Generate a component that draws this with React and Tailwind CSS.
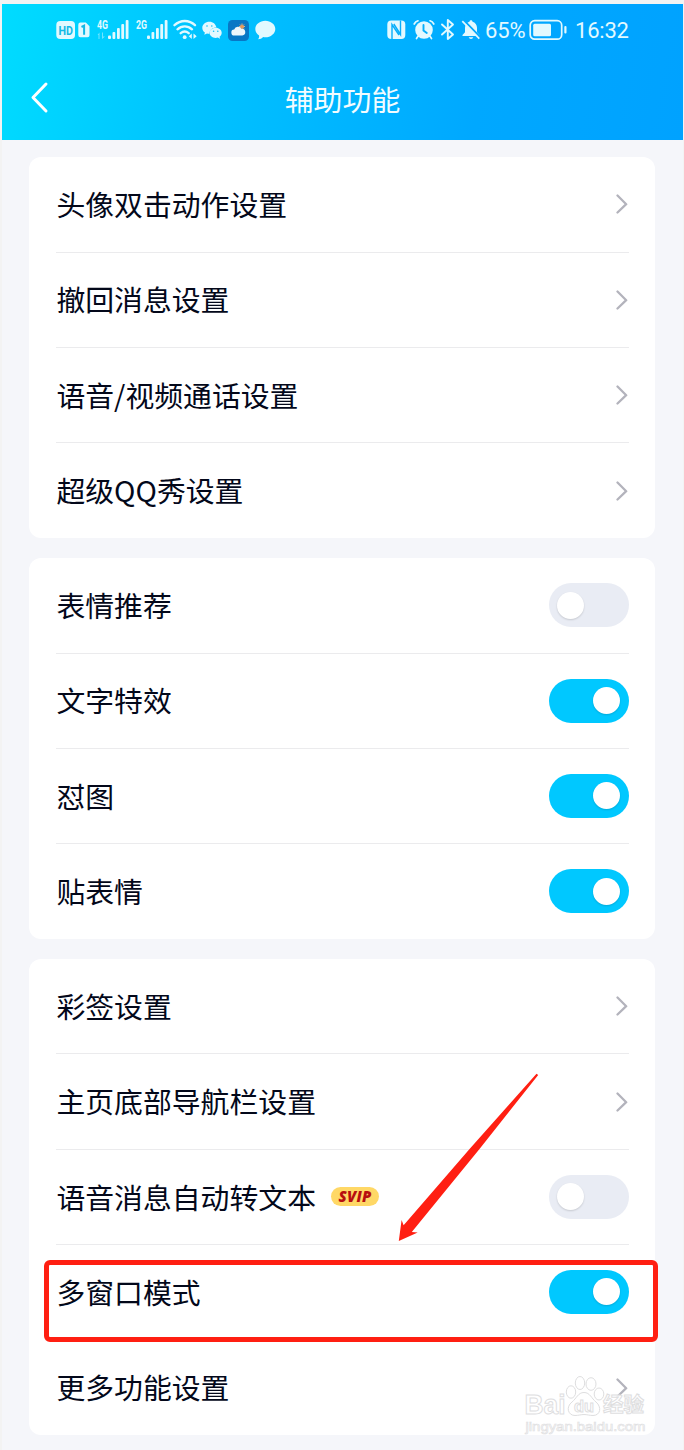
import { useState } from "react";

const sections = [
  [
    { label: "头像双击动作设置" },
    { label: "撤回消息设置" },
    { label: "语音/视频通话设置" },
    { label: "超级QQ秀设置" },
  ],
  [
    { label: "表情推荐", toggle: true, on: false },
    { label: "文字特效", toggle: true, on: true },
    { label: "怼图", toggle: true, on: true },
    { label: "贴表情", toggle: true, on: true },
  ],
  [
    { label: "彩签设置" },
    { label: "主页底部导航栏设置" },
    { label: "语音消息自动转文本", toggle: true, on: false, svip: true },
    { label: "多窗口模式", toggle: true, on: true, marked: true },
    { label: "更多功能设置" },
  ],
];

const Signal = ({ label, data }) => (
  <svg width="33" height="24" viewBox="0 0 33 24" fill="#e2f9ff">
    <text x="0" y="10.5" fontSize="12" fontWeight="700" fontFamily="Roboto, sans-serif" textLength="11" lengthAdjust="spacingAndGlyphs">
      {label}
    </text>
    {data && <path d="M.5 17l2-2.5V21h-1v-4zM5 14.5h1v4h2L5 21z" opacity=".5" />}
    <rect x="11" y="17.5" width="3" height="3.5" rx="1" />
    <rect x="15.5" y="14" width="2.8" height="7" rx="1" />
    <rect x="20" y="10" width="2.8" height="11" rx="1" />
    <rect x="24.3" y="6" width="2.8" height="15" rx="1" />
    <rect x="28.7" y="2" width="2.8" height="19" rx="1" />
  </svg>
);

const StatusBar = () => (
  <div className="flex h-[52px] items-center pl-[54px] font-['Roboto',sans-serif] text-[#e2f9ff]">
    {/* HD + sim */}
    <svg width="36" height="24" viewBox="0 0 36 24">
      <rect x="0.3" y="3" width="18.7" height="18" rx="4" fill="#e2f9ff" />
      <text x="2.4" y="16.6" fontSize="13" fontWeight="700" fontFamily="Roboto, sans-serif" fill="#13b9e6" textLength="14.5" lengthAdjust="spacingAndGlyphs">
        HD
      </text>
      <path d="M24.5 4.5h5.3l3.7 3.7v9a2 2 0 0 1-2 2h-7a2.2 2.2 0 0 1-2.2-2.2V6.7a2.2 2.2 0 0 1 2.2-2.2z" fill="#e2f9ff" />
      <path d="M25.5 9l2.6-1.3v9" fill="none" stroke="#13b9e6" strokeWidth="2" />
    </svg>
    <div className="ml-[5px] flex">
      <Signal label="4G" data />
    </div>
    <div className="ml-[6px] flex">
      <Signal label="2G" />
    </div>
    {/* wifi */}
    <svg className="ml-[4px]" width="26" height="24" viewBox="0 0 26 24" fill="none" stroke="#e2f9ff" strokeWidth="2.3" strokeLinecap="round">
      <path d="M1.5 7.2c6-5.6 14.6-5.6 20.5 0M4.5 11.3c4.3-4 10.2-4 14.5 0M7.7 15.2c2.5-2.2 5.5-2.2 8 0" />
      <circle cx="11.7" cy="19.2" r="1.9" fill="#e2f9ff" stroke="none" />
      <path d="M18.8 15.5v5.5l-3-2.7zM20.5 15.5v5.5l3.2-2.7z" fill="#e2f9ff" stroke="none" />
    </svg>
    {/* wechat */}
    <svg className="ml-[3px]" width="21" height="24" viewBox="0 0 21 24" fill="#e2f9ff">
      <path d="M7.5 3.8C3.4 3.8.3 6.5.3 9.9c0 1.9 1 3.5 2.6 4.6l-.6 2.3 2.7-1.3c.8.2 1.5.3 2.3.3.3-3.9 3-6.3 7.1-6.3C13.8 6.2 11 3.8 7.5 3.8z" />
      <path d="M13.7 9.7c-3.5 0-6.2 2.3-6.2 5.1s2.7 5.1 6.2 5.1c.7 0 1.4-.1 2-.3l2.4 1.2-.6-2c1.4-1 2.2-2.4 2.2-4 0-2.8-2.6-5.1-6-5.1z" />
      <g fill="#12bff5">
        <circle cx="5" cy="8" r=".8" />
        <circle cx="9.8" cy="8" r=".8" />
        <circle cx="11.6" cy="13.2" r=".8" />
        <circle cx="15.8" cy="13.2" r=".8" />
      </g>
    </svg>
    {/* weather */}
    <svg className="ml-[5px]" width="21" height="24" viewBox="0 0 21 24">
      <rect y="2" width="21" height="21" rx="4.5" fill="#0877c5" />
      <path d="M14 5.5v6M11 8.5h6M12 6.5l4 4M16 6.5l-4 4" stroke="#e5b184" strokeWidth="1" />
      <circle cx="14" cy="8.9" r="1.9" fill="#e59a5a" />
      <path d="M6.5 17.5a3 3 0 0 1-.3-6 4 4 0 0 1 7.4-.6 3.3 3.3 0 0 1 .7 6.6z" fill="#eef6fb" />
    </svg>
    {/* message */}
    <svg className="ml-[6px]" width="21" height="24" viewBox="0 0 21 24" fill="#e2f9ff">
      <path d="M10.3 2.8C4.8 2.8.3 6.4.3 11c0 2.7 1.5 5 3.8 6.5.2 1.7-.3 2.8-1 3.8 2 0 3.7-.7 5-2.2.7.1 1.5.2 2.2.2 5.5 0 10-3.7 10-8.3s-4.5-8.2-10-8.2z" />
    </svg>

    {/* NFC */}
    <svg className="ml-[111px]" width="19" height="24" viewBox="0 0 19 24">
      <rect x=".3" y="2.5" width="18" height="18.5" rx="4" fill="#e2f9ff" />
      <path d="M5 21V6.5L12 17M13.5 2.5v14L6.8 6" fill="none" stroke="#05aefb" strokeWidth="1.4" />
    </svg>
    {/* alarm */}
    <svg className="ml-[7px]" width="22" height="24" viewBox="0 0 22 24" fill="none" stroke="#e2f9ff" strokeLinecap="round">
      <circle cx="11" cy="12" r="8.8" fill="#e2f9ff" stroke="none" />
      <path d="M1.2 6Q2.5 3.5 5 2.8M20.8 6Q19.5 3.5 17 2.8M4.8 18.5l-1.3 2M17.2 18.5l1.3 2" strokeWidth="1.7" />
      <path d="M10.5 7v5.5l3.3 2.5" stroke="#05aefb" strokeWidth="1.9" />
    </svg>
    {/* bluetooth */}
    <svg className="ml-[5px]" width="17" height="24" viewBox="0 0 17 24" fill="none" stroke="#e2f9ff" strokeWidth="1.9" strokeLinejoin="round" strokeLinecap="round">
      <path d="M2 6.5l11 10L7.8 21V2L13 6.5l-11 10" />
    </svg>
    {/* bell off */}
    <svg className="ml-[4px]" width="20" height="24" viewBox="0 0 20 24">
      <path d="M10 2.3c-.9 0-1.5.6-1.5 1.4C5.8 4.5 4 6.8 4 9.8v4.5L1.5 17v1h17v-1L16 14.3V9.8c0-3-1.8-5.3-4.5-6.1 0-.8-.6-1.4-1.5-1.4zM7.7 19.2a2.4 2.4 0 0 0 4.6 0z" fill="#e2f9ff" />
      <path d="M2.5 2l17 17.5" stroke="#05a8fd" strokeWidth="2" />
      <path d="M1.3 3.2l17 17.5" stroke="#e2f9ff" strokeWidth="1.7" />
    </svg>
    <span className="ml-[4px] w-[42px] pt-px text-[22px] leading-6 tracking-[-0.1px]">65%</span>
    {/* battery */}
    <svg className="ml-[2px]" width="40" height="24" viewBox="0 0 40 24">
      <rect x="1.2" y="2.7" width="31.5" height="18.5" rx="4.5" fill="none" stroke="#e2f9ff" strokeWidth="1.7" />
      <rect x="4.2" y="5.7" width="17.8" height="12.5" rx="1.5" fill="#e2f9ff" />
      <rect x="35.3" y="8" width="2.2" height="7.5" rx="1" fill="#e2f9ff" />
    </svg>
    <span className="ml-[6px] pt-px text-[22px] leading-6 tracking-[-0.2px]">16:32</span>
  </div>
);

const Switch = ({ initial }) => {
  const [on, setOn] = useState(initial);

  return (
    <button
      type="button"
      role="switch"
      aria-checked={on}
      onClick={() => setOn(!on)}
      className={`flex h-11 w-20 items-center rounded-full ${
        on ? "justify-end bg-[#00c8ff] px-[9px]" : "justify-start bg-[#e9ecf4] px-[8px]"
      }`}
    >
      <span className="size-[27px] rounded-full bg-white shadow-[0_1px_2px_rgba(0,0,0,0.15)]" />
    </button>
  );
};

const Chevron = () => (
  <svg width="14" height="20" viewBox="0 0 14 20" fill="none" stroke="#b3b3bc" strokeWidth="2.3" strokeLinecap="round" strokeLinejoin="round">
    <path d="M2.5 1.5l8.7 8.7-8.7 8.3" />
  </svg>
);

const Row = ({ item, last }) => (
  <div className={`relative flex h-[95.2px] items-center justify-between ${last ? "" : "border-b border-[#ebebed]"}`}>
    <div className="flex items-center pb-[0.4px]">
      <span className="text-[28.85px] leading-10 whitespace-nowrap text-[#03081a]">{item.label}</span>
      {item.svip && (
        <span className="ml-[15px] flex h-[19px] w-12 items-center justify-center rounded-full bg-[#ffd866] font-['Open_Sans',sans-serif] text-[15px] leading-none font-extrabold tracking-[0.2px] text-[#b80f0f] italic">
          SVIP
        </span>
      )}
    </div>
    {item.toggle ? <Switch initial={item.on} /> : <Chevron />}
    {item.marked && (
      <div className="absolute top-[15px] -left-[12.5px] h-[82px] w-[614px] rounded-[6px] border-[5px] border-[#ff1f12]" />
    )}
  </div>
);

const Watermark = () => (
  <svg className="absolute top-[1372px] left-[522px]" width="130" height="66" viewBox="0 0 130 66">
    <g fill="#ffffff" fillOpacity=".8" stroke="#dededf" strokeWidth="1">
      <ellipse cx="49" cy="20" rx="4.7" ry="6.2" />
      <ellipse cx="58" cy="11" rx="4.7" ry="6.5" />
      <ellipse cx="69" cy="12" rx="5" ry="6.3" />
      <ellipse cx="77" cy="22" rx="4.8" ry="6" />
      <path d="M62 20.5c-6 0-7.5 6-12 9.5-6.5 5-4 13.5 3 13.5 3.5 0 6-1 9-1s5.5 1 9 1c7.5 0 9-8.5 3-13.5-4.5-3.5-6-9.5-12-9.5z" />
      <text x="2.5" y="41.5" fontSize="27" fontWeight="700" fontFamily="Liberation Sans, sans-serif" textLength="41" lengthAdjust="spacingAndGlyphs">Bai</text>
      <text x="52" y="39.5" fontSize="17" fontWeight="700" fontFamily="Liberation Sans, sans-serif" textLength="20" lengthAdjust="spacingAndGlyphs">du</text>
      <text x="81" y="40" fontSize="20" fontWeight="700" fontFamily="Noto Sans CJK SC, sans-serif" textLength="41" lengthAdjust="spacingAndGlyphs">经验</text>
      <text x="3.5" y="59" fontSize="12.5" strokeWidth=".6" fontFamily="Liberation Sans, sans-serif" textLength="120" lengthAdjust="spacingAndGlyphs">jingyan.baidu.com</text>
    </g>
  </svg>
);

export default function App() {
  return (
    <div className="relative h-[1450px] w-[684px] overflow-hidden bg-[#f3f3f3] pt-1 pr-px pl-[2px] font-['Noto_Sans_CJK_SC',sans-serif]">
      <div className="h-full bg-[#f5f6fa]">
        <header className="h-[136px] bg-[linear-gradient(100deg,#00dcff_0%,#00c4ff_28%,#00a8ff_70%,#00a2ff_100%)]">
          <StatusBar />
          <div className="relative flex h-[84px] items-center justify-center">
            <svg className="absolute top-[25px] left-[28px]" width="20" height="34" viewBox="0 0 20 34" fill="none" stroke="white" strokeWidth="3" strokeLinecap="round" strokeLinejoin="round">
              <path d="M16 3L3 16.5 16 30" />
            </svg>
            <h1 className="pb-px text-[28.9px] leading-10 text-[#f2fcff]">辅助功能</h1>
          </div>
        </header>

        <main className="flex flex-col gap-[20.2px] pt-[17.4px] pr-[28px] pl-[27px]">
          {sections.map((items, i) => (
            <section key={i} className="rounded-xl bg-white pr-[26px] pl-[27.4px]">
              {items.map((item, j) => (
                <Row key={item.label} item={item} last={j === items.length - 1} />
              ))}
            </section>
          ))}
        </main>
      </div>

      {/* pointer arrow */}
      <svg className="absolute top-[1072px] left-[396px]" width="144" height="172" viewBox="0 0 144 172" fill="#ff1f12">
        <path d="M140.5 1.7L142.2 3 83.5 77 15.8 160 21.7 160.6 2.8 169 5.6 148 7.6 153.2 74 76.5z" />
      </svg>
      <Watermark />
    </div>
  );
}
